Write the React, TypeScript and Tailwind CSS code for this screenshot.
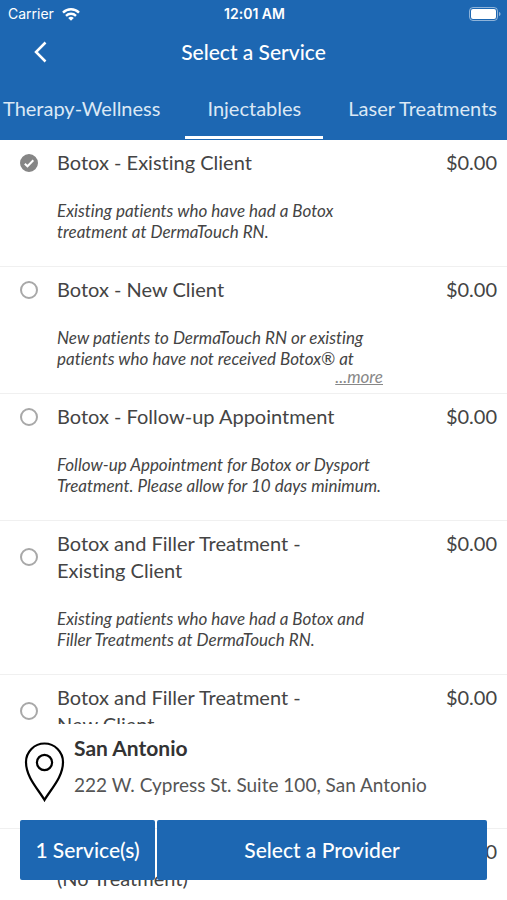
import { useState } from "react";

type Service = {
  id: number;
  lines: string[];
  price: string;
  description: string[];
  more?: boolean;
};

const tabs = ["Therapy-Wellness", "Injectables", "Laser Treatments"];

const services: Service[] = [
  {
    id: 1,
    lines: ["Botox - Existing Client"],
    price: "$0.00",
    description: [
      "Existing patients who have had a Botox",
      "treatment at DermaTouch RN.",
    ],
  },
  {
    id: 2,
    lines: ["Botox - New Client"],
    price: "$0.00",
    description: [
      "New patients to DermaTouch RN or existing",
      "patients who have not received Botox® at",
    ],
    more: true,
  },
  {
    id: 3,
    lines: ["Botox - Follow-up Appointment"],
    price: "$0.00",
    description: [
      "Follow-up Appointment for Botox or Dysport",
      "Treatment. Please allow for 10 days minimum.",
    ],
  },
  {
    id: 4,
    lines: ["Botox and Filler Treatment -", "Existing Client"],
    price: "$0.00",
    description: [
      "Existing patients who have had a Botox and",
      "Filler Treatments at DermaTouch RN.",
    ],
  },
  {
    id: 5,
    lines: ["Botox and Filler Treatment -", "New Client"],
    price: "$0.00",
    description: [],
  },
  {
    id: 6,
    lines: ["", "(No Treatment)"],
    price: "$0.00",
    description: [],
  },
];

const StatusBar = () => (
  <div className="grid h-7 grid-cols-3 items-center pr-1.5 pl-2 font-['Inter',sans-serif] text-sm">
    <div className="flex items-center gap-2">
      <span>Carrier</span>
      <svg viewBox="0 0 18 13" className="h-[13px] w-[18px]" fill="none" stroke="currentColor" strokeWidth="2.4">
        <path d="M1 4.6a11.4 11.4 0 0 1 16 0" />
        <path d="M4 7.8a7.2 7.2 0 0 1 10 0" />
        <path d="M9 12.8 6.2 10a4 4 0 0 1 5.6 0z" fill="currentColor" stroke="none" />
      </svg>
    </div>
    <span className="text-center font-semibold">12:01 AM</span>
    <svg viewBox="0 0 32 14" className="h-3.5 w-8 justify-self-end" fill="none">
      <rect x="0.5" y="0.5" width="28" height="13" rx="3.5" stroke="#fff" strokeOpacity="0.5" />
      <rect x="2" y="2" width="25" height="10" rx="2" fill="#fff" />
      <path d="M30 5v4c1-.3 1.5-1.1 1.5-2S31 5.3 30 5z" fill="#fff" fillOpacity="0.5" />
    </svg>
  </div>
);

const ServiceRow = ({
  service,
  checked,
  onToggle,
}: {
  service: Service;
  checked: boolean;
  onToggle: () => void;
}) => (
  <li className="border-b border-[#f0f0f0] pt-[9px] pr-[10px] pl-5">
    <div className="flex items-start justify-between">
      <label className="flex items-center gap-[19px] text-xl leading-[27px]">
        <span className="relative flex h-[18px] w-[18px] shrink-0">
          <input
            type="checkbox"
            checked={checked}
            onChange={onToggle}
            className="h-[18px] w-[18px] appearance-none rounded-full border-2 border-[#a8a8a8] bg-white checked:border-[#868686] checked:bg-[#868686]"
          />
          {checked && (
            <svg viewBox="0 0 18 18" className="pointer-events-none absolute inset-0" fill="none" stroke="#fff" strokeWidth="2">
              <path d="M4.8 9.7l2.7 2.6 5.8-6" />
            </svg>
          )}
        </span>
        <span>
          {service.lines.map((line) => (
            <span key={line} className="block min-h-[27px]">
              {line}
            </span>
          ))}
        </span>
      </label>
      <span className="text-xl leading-[27px]">{service.price}</span>
    </div>
    <p className="mt-6 min-h-[42px] pl-[37px] text-[17px] leading-[21px] italic">
      {service.description.map((line) => (
        <span key={line} className="block">
          {line}
        </span>
      ))}
    </p>
    <div className="flex h-6 w-[363px] max-w-full items-start justify-end">
      {service.more && (
        <a href="#more" className="text-[17px] leading-4 text-[#888] italic underline">
          ...more
        </a>
      )}
    </div>
  </li>
);

const App = () => {
  const [selected, setSelected] = useState<number[]>([1]);
  const [activeTab, setActiveTab] = useState("Injectables");

  const toggle = (id: number) =>
    setSelected((prev) =>
      prev.includes(id) ? prev.filter((s) => s !== id) : [...prev, id],
    );

  return (
    <div className="relative flex h-screen flex-col overflow-hidden bg-white font-['Lato',sans-serif] text-[#444] [font-variant-ligatures:none]">
      <header className="shrink-0 bg-[#1d67b2] text-white">
        <StatusBar />
        <div className="grid h-12 grid-cols-[1fr_auto_1fr] items-center">
          <button type="button" aria-label="Back" className="ml-8 w-4">
            <svg viewBox="0 0 16 22" className="h-[22px] w-4" fill="none" stroke="currentColor" strokeWidth="2.5">
              <path d="M13.5 1.5 4 11l9.5 9.5" />
            </svg>
          </button>
          <h1 className="text-[21px] leading-6 font-medium">Select a Service</h1>
        </div>
        <nav className="flex h-16 justify-between pr-[10px] pb-px pl-[3px]">
          {tabs.map((tab) => (
            <button
              key={tab}
              type="button"
              onClick={() => setActiveTab(tab)}
              className={
                tab === activeTab
                  ? "border-y-[3px] border-t-transparent border-b-white px-[22px] text-xl text-[#dbe8f5]"
                  : "border-y-[3px] border-transparent text-xl text-[#dbe8f5]"
              }
            >
              {tab}
            </button>
          ))}
        </nav>
      </header>

      <ul className="min-h-0 flex-1 overflow-hidden">
        {services.map((service) => (
          <ServiceRow
            key={service.id}
            service={service}
            checked={selected.includes(service.id)}
            onToggle={() => toggle(service.id)}
          />
        ))}
      </ul>

      <footer className="absolute inset-x-0 bottom-5">
        <div className="flex items-start gap-[9px] bg-white px-6 pt-[10px] pb-[18px]">
          <svg viewBox="0 0 41 60" className="mt-2 h-[60px] w-[41px] shrink-0" fill="none" stroke="#000" strokeWidth="2.2">
            <path d="M20.5 58C14.500 47.500 2 35.500 2 20a18.500 18.500 0 0 1 37 0C39 35.500 26.500 47.500 20.500 58z" />
            <circle cx="20.5" cy="20.5" r="7.6" />
          </svg>
          <div>
            <h2 className="text-[21px] leading-[27px] font-bold text-[#333]">San Antonio</h2>
            <p className="mt-[10px] text-[19px] leading-[27px] text-[#555]">
              222 W. Cypress St. Suite 100, San Antonio
            </p>
          </div>
        </div>
        <div className="flex gap-0.5 px-5 text-[21px] font-medium text-white">
          <button type="button" className="h-[60px] w-[135px] rounded-xs bg-[#1d67b2]">
            {selected.length} Service(s)
          </button>
          <button type="button" className="h-[60px] flex-1 rounded-xs bg-[#1d67b2]">
            Select a Provider
          </button>
        </div>
      </footer>
    </div>
  );
};

export default App;
